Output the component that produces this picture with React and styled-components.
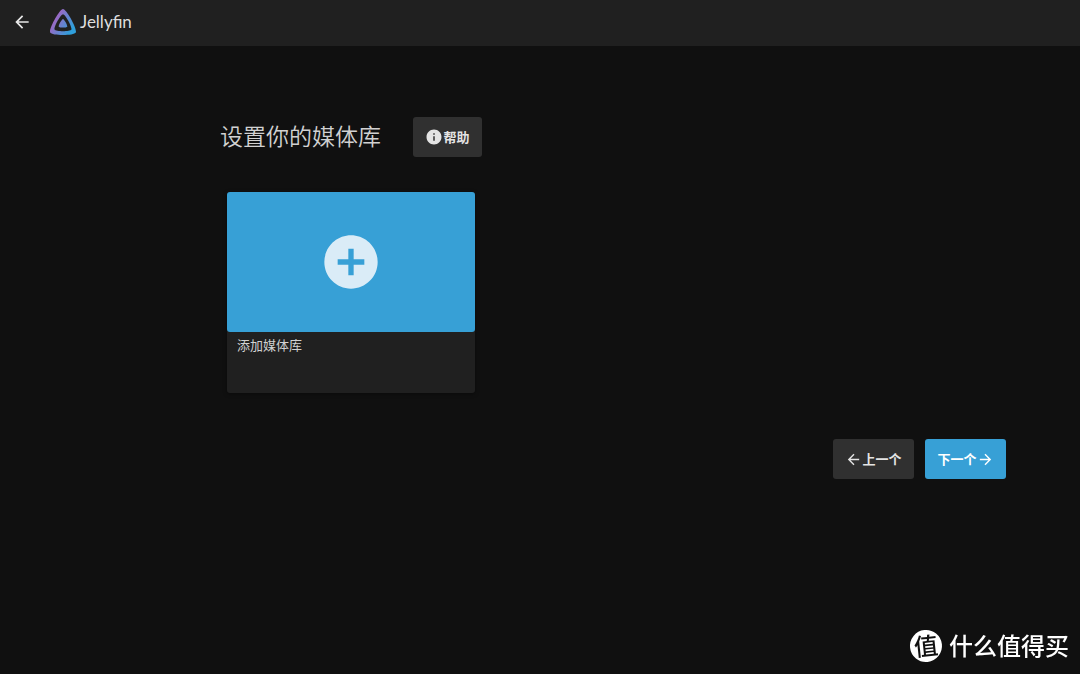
import React from 'react';
import styled, { createGlobalStyle } from 'styled-components';
import { MdArrowBack, MdArrowForward, MdInfo, MdAddCircle } from 'react-icons/md';

const GlobalStyle = createGlobalStyle`
  * {
    box-sizing: border-box;
  }

  body {
    margin: 0;
    background-color: #101010;
    color: #d1d1d1;
    font-family: 'Noto Sans CJK SC', 'Noto Sans', sans-serif;
    font-size: 13px;
  }
`;

const Page = styled.div`
  display: flex;
  flex-direction: column;
  min-height: 100vh;
`;

const Header = styled.header`
  display: flex;
  align-items: center;
  height: 46px;
  padding: 0 8px 2px;
  background-color: #202020;
`;

const IconButton = styled.button`
  display: flex;
  padding: 4px;
  border: none;
  background: none;
  color: #e8e8e8;
  font-size: 20px;
  cursor: pointer;
`;

const Brand = styled.a`
  display: flex;
  align-items: center;
  gap: 4px;
  margin-left: 14px;
  color: #dedede;
  font-family: Lato, 'Noto Sans', sans-serif;
  font-size: 17px;
  line-height: 24px;
  text-decoration: none;
`;

const Content = styled.main`
  display: flex;
  flex-direction: column;
  padding: 71px 74px 40px 220px;
`;

const TitleRow = styled.div`
  display: flex;
  align-items: center;
  gap: 32px;
`;

const Title = styled.h1`
  margin: 0;
  padding-bottom: 4px;
  font-size: 23px;
  font-weight: 350;
  line-height: 36px;
`;

const Button = styled.button`
  display: flex;
  align-items: center;
  justify-content: center;
  min-width: ${(props) => (props.$wide ? '81px' : '69px')};
  height: 40px;
  padding: 0 12px;
  border: none;
  border-radius: 3px;
  background-color: ${(props) => (props.$primary ? '#37a0d6' : '#303030')};
  color: ${(props) => (props.$primary ? '#fff' : '#e4e4e4')};
  font-family: inherit;
  font-size: 13px;
  font-weight: 700;
  line-height: 20px;
  cursor: pointer;

  svg {
    font-size: ${(props) => (props.$wide ? '17px' : '18px')};
  }
`;

const Libraries = styled.div`
  display: flex;
  flex-wrap: wrap;
  padding: 35px 7px 0;
`;

const Card = styled.div`
  width: 248px;
  border-radius: 3px;
  background-color: #202020;
  box-shadow: 0 1px 4px rgba(0, 0, 0, 0.4);
`;

const CardImage = styled.button`
  display: flex;
  align-items: center;
  justify-content: center;
  width: 100%;
  height: 140px;
  padding: 0;
  border: none;
  border-radius: 3px;
  background-color: #37a0d6;
  color: #daecf7;
  font-size: 64px;
  cursor: pointer;
`;

const CardFooter = styled.div`
  min-height: 61px;
  padding: 3px 10px;
  line-height: 20px;
`;

const Actions = styled.div`
  display: flex;
  justify-content: flex-end;
  gap: 11px;
  margin-top: 46px;
`;

const Watermark = styled.div`
  position: fixed;
  right: 11px;
  bottom: 11px;
  display: flex;
  align-items: center;
  gap: 7px;
  color: #fff;
  font-size: 24px;
  font-weight: 500;
  line-height: 32px;
`;

const WatermarkText = styled.span`
  padding-bottom: 2px;
`;

const WatermarkBadge = styled.span`
  display: flex;
  align-items: center;
  justify-content: center;
  width: 32px;
  height: 32px;
  padding-bottom: 2px;
  border-radius: 50%;
  background-color: #fff;
  color: #101010;
  transform: rotate(-6deg);
`;

const Logo = () => (
  <svg width="26" height="26" viewBox="0 0 24 24" aria-hidden="true">
    <defs>
      <linearGradient id="logo-gradient" x1="3" y1="9" x2="20" y2="19" gradientUnits="userSpaceOnUse">
        <stop offset="0" stopColor="#a463c2" />
        <stop offset="1" stopColor="#2f9fdb" />
      </linearGradient>
    </defs>
    <path
      fill="url(#logo-gradient)"
      d="M12 .002C8.826.002-1.398 18.537.16 21.666c1.56 3.129 22.14 3.094 23.682 0C25.384 18.573 15.177 0 12 0zm7.76 18.949c-1.008 2.028-14.493 2.05-15.514 0C3.224 16.9 9.92 4.755 12.003 4.755c2.081 0 8.77 12.166 7.759 14.196zM12 9.198c-1.054 0-4.446 6.15-3.93 7.189.518 1.04 7.348 1.027 7.86 0 .511-1.027-2.874-7.19-3.93-7.19z"
    />
  </svg>
);

const App = () => {
  return (
    <Page lang="zh-CN">
      <GlobalStyle />
      <Header>
        <IconButton type="button" aria-label="返回">
          <MdArrowBack />
        </IconButton>
        <Brand href="#">
          <Logo />
          <span>Jellyfin</span>
        </Brand>
      </Header>
      <Content>
        <TitleRow>
          <Title>设置你的媒体库</Title>
          <Button type="button">
            <MdInfo />
            <span>帮助</span>
          </Button>
        </TitleRow>
        <Libraries>
          <Card>
            <CardImage type="button" aria-label="添加媒体库">
              <MdAddCircle />
            </CardImage>
            <CardFooter>添加媒体库</CardFooter>
          </Card>
        </Libraries>
        <Actions>
          <Button type="button" $wide>
            <MdArrowBack />
            <span>上一个</span>
          </Button>
          <Button type="button" $wide $primary>
            <span>下一个</span>
            <MdArrowForward />
          </Button>
        </Actions>
      </Content>
      <Watermark>
        <WatermarkBadge>值</WatermarkBadge>
        <WatermarkText>什么值得买</WatermarkText>
      </Watermark>
    </Page>
  );
};

export default App;
